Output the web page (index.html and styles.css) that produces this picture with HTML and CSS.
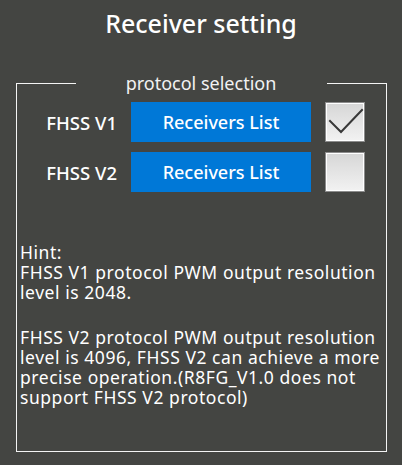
FILE: index.html
```html
<!DOCTYPE html>
<html>
<head>
<meta charset="utf-8">
<link rel="stylesheet" href="styles.css">
</head>
<body>
<div class="page">
  <h1 class="title">Receiver setting</h1>
  <fieldset class="group">
    <legend class="legend">protocol selection</legend>
    <div class="rows">
      <div class="row">
        <span class="label">FHSS V1</span>
        <button class="btn">Receivers List</button>
        <span class="check checked">
          <svg class="tick" viewBox="0 0 38 38" width="38" height="38"><polyline points="4,18 15,29 36,7" fill="none" stroke="#383838" stroke-width="2" stroke-linecap="square"/></svg>
        </span>
      </div>
      <div class="row">
        <span class="label">FHSS V2</span>
        <button class="btn">Receivers List</button>
        <span class="check"></span>
      </div>
    </div>
    <div class="hint">
      <p class="first">Hint:
FHSS V1 protocol PWM output resolution level is 2048.</p>
      <p>FHSS V2 protocol PWM output resolution level is 4096, FHSS V2 can achieve a more precise operation.(R8FG_V1.0 does not support FHSS V2 protocol)</p>
    </div>
  </fieldset>
</div>
</body>
</html>
```
FILE: styles.css
```css
html, body {
  margin: 0;
  padding: 0;
  background: #444542;
}
.page {
  width: 402px;
  height: 465px;
  font-family: "Noto Sans", sans-serif;
  color: #ffffff;
  box-sizing: border-box;
  padding-top: 8px;
}
.title {
  margin: 0;
  text-align: center;
  font-family: "Noto Sans", sans-serif;
  font-weight: 500;
  font-size: 25px;
  line-height: 30px;
  height: 30px;
}
.group {
  margin: 35px 0 0 16px;
  width: 371px;
  height: 379px;
  box-sizing: border-box;
  border: 1px solid #f4f4f4;
  padding: 0;
  min-inline-size: 0;
}
.legend {
  margin: 0 auto;
  padding: 0 51px 0 50px;
  font-family: "Noto Sans", sans-serif;
  font-size: 18px;
  line-height: 20px;
  color: #f2f2f2;
}
.rows {
  display: flex;
  flex-direction: column;
  gap: 10px;
  margin-top: 9px;
}
.row {
  display: flex;
  align-items: center;
  height: 40px;
}
.label {
  width: 100px;
  text-align: right;
  font-family: "Noto Sans", sans-serif;
  font-size: 18.5px;
  font-weight: 500;
  margin-right: 14px;
}
.btn {
  width: 180px;
  height: 40px;
  border: none;
  background: #0078d7;
  color: #ffffff;
  font-family: "Noto Sans", sans-serif;
  font-size: 18px;
  font-weight: 500;
  padding: 0;
  margin: 0 14px 0 0;
}
.check {
  width: 40px;
  height: 40px;
  box-sizing: border-box;
  border: 1px solid #8c8c8c;
  box-shadow: inset 0 0 0 1px #ffffff;
  background: linear-gradient(#d6d6d6, #f2f2f2);
  display: flex;
  align-items: center;
  justify-content: center;
}
.tick {
  display: block;
}
.hint {
  margin: 50px 0 0 3px;
  width: 366px;
  font-family: "Noto Sans", sans-serif;
  font-size: 17.5px;
  letter-spacing: 0.55px;
  line-height: 20px;
  color: #ffffff;
}
.hint p {
  margin: 0 0 25px 0;
}
.hint .first {
  white-space: pre-line;
}
```
